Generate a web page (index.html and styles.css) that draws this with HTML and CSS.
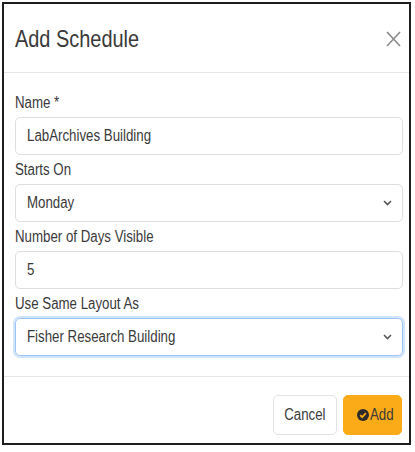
FILE: index.html
```html
<!DOCTYPE html>
<html lang="en">
<head>
<meta charset="utf-8">
<title>Add Schedule</title>
<link rel="stylesheet" href="styles.css">
</head>
<body>
<div class="modal">
  <div class="modal-header">
    <h1 class="modal-title"><span class="nar">Add Schedule</span></h1>
    <svg class="close" width="15" height="16" viewBox="0 0 15 16"><path d="M1 1 L14 15 M14 1 L1 15" fill="none" stroke="#8a8a8a" stroke-width="1.6"/></svg>
  </div>
  <div class="modal-body">
    <div class="group">
      <label class="label"><span class="nar">Name *</span></label>
      <div class="field"><span class="nar">LabArchives Building</span></div>
    </div>
    <div class="group">
      <label class="label"><span class="nar">Starts On</span></label>
      <div class="field select">
        <span class="nar">Monday</span>
        <svg class="chev" width="9" height="6" viewBox="0 0 9 6"><path d="M1 1 L4.5 4.6 L8 1" fill="none" stroke="#555" stroke-width="1.5"/></svg>
      </div>
    </div>
    <div class="group">
      <label class="label"><span class="nar">Number of Days Visible</span></label>
      <div class="field"><span class="nar">5</span></div>
    </div>
    <div class="group">
      <label class="label"><span class="nar">Use Same Layout As</span></label>
      <div class="field select focus">
        <span class="nar">Fisher Research Building</span>
        <svg class="chev" width="9" height="6" viewBox="0 0 9 6"><path d="M1 1 L4.5 4.6 L8 1" fill="none" stroke="#555" stroke-width="1.5"/></svg>
      </div>
    </div>
  </div>
  <div class="modal-footer">
    <button class="btn btn-cancel"><span class="nar mid">Cancel</span></button>
    <button class="btn btn-add"><svg class="check" width="12" height="12" viewBox="0 0 16 16"><circle cx="8" cy="8" r="8" fill="#2b2b2b"/><path d="M4.2 8.2 L6.9 10.8 L11.8 5.6" fill="none" stroke="#f9aa14" stroke-width="2.4"/></svg><span class="nar">Add</span></button>
  </div>
</div>
</body>
</html>
```

FILE: styles.css
```css
* { box-sizing: border-box; }
html, body { margin: 0; padding: 0; background: #fff; }
body {
  font-family: "Liberation Sans", Arial, sans-serif;
  color: #333;
}
.nar {
  display: inline-block;
  white-space: nowrap;
  transform: scaleX(0.83);
  transform-origin: left center;
}
.nar.mid { transform-origin: center center; }
.modal {
  margin: 2px;
  width: 409px;
  height: 443px;
  border: 2px solid #1e1e1e;
  background: #fff;
  display: flex;
  flex-direction: column;
}
.modal-header {
  display: flex;
  align-items: center;
  justify-content: space-between;
  padding: 20px 8px 19px 11px;
  border-bottom: 1px solid #e6e6e6;
}
.modal-title {
  margin: 0;
  font-weight: normal;
  font-size: 24px;
  line-height: 29px;
  color: #3a3a3a;
}
.close { flex: none; margin-top: 1px; }
.modal-body {
  display: flex;
  flex-direction: column;
  gap: 4px;
  padding: 19px 6px 20px 11px;
  border-bottom: 1px solid #e6e6e6;
}
.group { display: flex; flex-direction: column; }
.label {
  font-size: 16px;
  line-height: 21px;
  margin-bottom: 4px;
  color: #3a3a3a;
}
.field {
  height: 38px;
  border: 1px solid #dedede;
  border-radius: 5px;
  padding: 0 11px;
  display: flex;
  align-items: center;
  font-size: 16px;
  color: #3a3a3a;
}
.select { justify-content: space-between; padding-right: 10px; }
.chev { flex: none; }
.focus {
  border-color: #9cc5f5;
  box-shadow: 0 0 0 2px #d2e4fa;
}
.modal-footer {
  display: flex;
  justify-content: flex-end;
  gap: 6px;
  padding: 18px 7px 8px 11px;
}
.btn {
  font-family: inherit;
  font-size: 16px;
  height: 40px;
  border-radius: 5px;
  display: flex;
  align-items: center;
  color: #3a3a3a;
}
.btn-cancel {
  width: 64px;
  justify-content: center;
  background: #fff;
  border: 1px solid #e2e2e2;
}
.btn-add {
  width: 59px;
  padding: 0 0 0 13px;
  gap: 1px;
  background: #fbab18;
  border: 1px solid #fbab18;
}
.check { flex: none; }
```
